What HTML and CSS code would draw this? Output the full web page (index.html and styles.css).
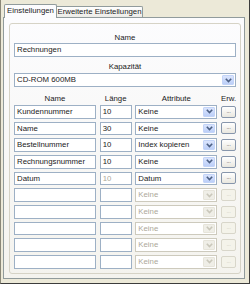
FILE: index.html
```html
<!DOCTYPE html>
<html>
<head>
<meta charset="utf-8">
<link rel="stylesheet" href="styles.css">
</head>
<body>
<div class="window">
  <div class="tabs">
    <div class="tab active">Einstellungen</div>
    <div class="tab">Erweiterte Einstellungen</div>
  </div>
  <div class="panel">
    <div class="frame">
      <div class="label">Name</div>
      <div class="field">Rechnungen</div>
      <div class="label gap">Kapazität</div>
      <div class="select wide"><span class="val">CD-ROM 600MB</span><span class="drop"><svg viewBox="0 0 7 5" width="7" height="5"><path d="M0.8 0.8 L3.5 3.6 L6.2 0.8" fill="none" stroke="currentColor" stroke-width="1.6"/></svg></span></div>
      <div class="cols head">
        <div>Name</div><div>Länge</div><div>Attribute</div><div>Erw.</div>
      </div>
      <div class="cols rows">
        <div class="field">Kundennummer</div><div class="field">10</div>
        <div class="select"><span class="val">Keine</span><span class="drop"><svg viewBox="0 0 7 5" width="7" height="5"><path d="M0.8 0.8 L3.5 3.6 L6.2 0.8" fill="none" stroke="currentColor" stroke-width="1.6"/></svg></span></div>
        <div class="btn">...</div>

        <div class="field">Name</div><div class="field">30</div>
        <div class="select"><span class="val">Keine</span><span class="drop"><svg viewBox="0 0 7 5" width="7" height="5"><path d="M0.8 0.8 L3.5 3.6 L6.2 0.8" fill="none" stroke="currentColor" stroke-width="1.6"/></svg></span></div>
        <div class="btn">...</div>

        <div class="field">Bestellnummer</div><div class="field">10</div>
        <div class="select"><span class="val">Index kopieren</span><span class="drop"><svg viewBox="0 0 7 5" width="7" height="5"><path d="M0.8 0.8 L3.5 3.6 L6.2 0.8" fill="none" stroke="currentColor" stroke-width="1.6"/></svg></span></div>
        <div class="btn">...</div>

        <div class="field">Rechnungsnummer</div><div class="field">10</div>
        <div class="select"><span class="val">Keine</span><span class="drop"><svg viewBox="0 0 7 5" width="7" height="5"><path d="M0.8 0.8 L3.5 3.6 L6.2 0.8" fill="none" stroke="currentColor" stroke-width="1.6"/></svg></span></div>
        <div class="btn">...</div>

        <div class="field">Datum</div><div class="field dim">10</div>
        <div class="select"><span class="val">Datum</span><span class="drop"><svg viewBox="0 0 7 5" width="7" height="5"><path d="M0.8 0.8 L3.5 3.6 L6.2 0.8" fill="none" stroke="currentColor" stroke-width="1.6"/></svg></span></div>
        <div class="btn">...</div>

        <div class="field"></div><div class="field"></div>
        <div class="select off"><span class="val">Keine</span><span class="drop"><svg viewBox="0 0 7 5" width="7" height="5"><path d="M0.8 0.8 L3.5 3.6 L6.2 0.8" fill="none" stroke="currentColor" stroke-width="1.6"/></svg></span></div>
        <div class="btn off">...</div>

        <div class="field"></div><div class="field"></div>
        <div class="select off"><span class="val">Keine</span><span class="drop"><svg viewBox="0 0 7 5" width="7" height="5"><path d="M0.8 0.8 L3.5 3.6 L6.2 0.8" fill="none" stroke="currentColor" stroke-width="1.6"/></svg></span></div>
        <div class="btn off">...</div>

        <div class="field"></div><div class="field"></div>
        <div class="select off"><span class="val">Keine</span><span class="drop"><svg viewBox="0 0 7 5" width="7" height="5"><path d="M0.8 0.8 L3.5 3.6 L6.2 0.8" fill="none" stroke="currentColor" stroke-width="1.6"/></svg></span></div>
        <div class="btn off">...</div>

        <div class="field"></div><div class="field"></div>
        <div class="select off"><span class="val">Keine</span><span class="drop"><svg viewBox="0 0 7 5" width="7" height="5"><path d="M0.8 0.8 L3.5 3.6 L6.2 0.8" fill="none" stroke="currentColor" stroke-width="1.6"/></svg></span></div>
        <div class="btn off">...</div>

        <div class="field"></div><div class="field"></div>
        <div class="select off"><span class="val">Keine</span><span class="drop"><svg viewBox="0 0 7 5" width="7" height="5"><path d="M0.8 0.8 L3.5 3.6 L6.2 0.8" fill="none" stroke="currentColor" stroke-width="1.6"/></svg></span></div>
        <div class="btn off">...</div>
      </div>
    </div>
  </div>
</div>
</body>
</html>
```
FILE: styles.css
```css
* { box-sizing: border-box; }
html, body { margin: 0; padding: 0; }
body {
  width: 250px;
  height: 284px;
  overflow: hidden;
  background: #ece9d8;
  font-family: "Liberation Sans", Arial, sans-serif;
  font-size: 7.8px;
  color: #1a1a1a;
}
.window {
  width: 250px;
  height: 284px;
  border-left: 1px solid #8a8778;
  border-right: 1px solid #3c3c3c;
  border-bottom: 1px solid #3c3c3c;
  padding: 4px 0 0 2px;
}
.tabs {
  display: flex;
  align-items: flex-end;
  height: 13px;
  margin-left: 1px;
  position: relative;
  z-index: 1;
}
.tab {
  height: 11px;
  width: 86px;
  border: 1px solid #919b9c;
  border-bottom: none;
  border-left: none;
  border-radius: 0 2px 0 0;
  background: linear-gradient(#ffffff, #ecebe6);
  line-height: 10px;
  text-align: center;
  white-space: nowrap;
}
.tab.active {
  height: 14px;
  width: 53px;
  border-left: 1px solid #919b9c;
  border-radius: 2px 2px 0 0;
  background: #fcfcfe;
  margin-bottom: -1px;
  line-height: 12px;
}
.panel {
  width: 242px;
  height: 262px;
  border: 1px solid #919b9c;
  background: linear-gradient(#fcfcfe, #f4f3ee);
  padding: 5px 3px 4px 5px;
  display: flex;
  flex-direction: column;
}
.frame {
  flex: 1;
  border: 1px solid #d6d3c6;
  border-radius: 3px;
  padding: 8px 4px 0 4px;
  display: flex;
  flex-direction: column;
}
.label {
  height: 11px;
  line-height: 11px;
  text-align: center;
}
.label.gap { margin-top: 4px; }
.field {
  height: 14px;
  border: 1px solid #9db0c5;
  background: #fff;
  line-height: 12px;
  padding-left: 2px;
  white-space: nowrap;
  overflow: hidden;
}
.field.dim { color: #aca899; }
.select {
  height: 14px;
  border: 1px solid #9db0c5;
  background: #fff;
  display: flex;
  align-items: stretch;
  padding: 1px;
}
.select.wide { margin-top: 1px; }
.select .val {
  flex: 1;
  padding-left: 1px;
  line-height: 10px;
  white-space: nowrap;
  overflow: hidden;
}
.select .drop {
  width: 12px;
  border-radius: 1px;
  background: linear-gradient(#dbe5fd, #bccff8);
  border: 1px solid #c3d4f8;
  color: #4d6185;
  display: flex;
  align-items: center;
  justify-content: center;
}
.select.off { border-color: #cdcabd; }
.select.off .val { color: #aca899; }
.select.off .drop {
  background: #efeee7;
  border-color: #e6e4da;
  color: #c9c7ba;
}
.cols {
  display: grid;
  grid-template-columns: 82px 32px 82px 15px;
  column-gap: 3.67px;
}
.head {
  margin-top: 6px;
  margin-bottom: 1px;
  height: 11px;
  line-height: 11px;
  text-align: center;
}
.rows {
  grid-auto-rows: 13.67px;
  row-gap: 3px;
}
.rows .field, .rows .select { height: 100%; }
.rows .field { line-height: 11.67px; }
.rows .select .val { line-height: 9.67px; }
.btn {
  height: 12px;
  align-self: center;
  border: 1px solid #8796ac;
  border-radius: 2px;
  background: linear-gradient(#ffffff, #e9e7df);
  color: #444;
  font-size: 6px;
  line-height: 8px;
  text-align: center;
  letter-spacing: -0.3px;
}
.btn.off {
  border-color: #d8d6ca;
  background: #f4f3ea;
  color: #cac8bb;
}
```
